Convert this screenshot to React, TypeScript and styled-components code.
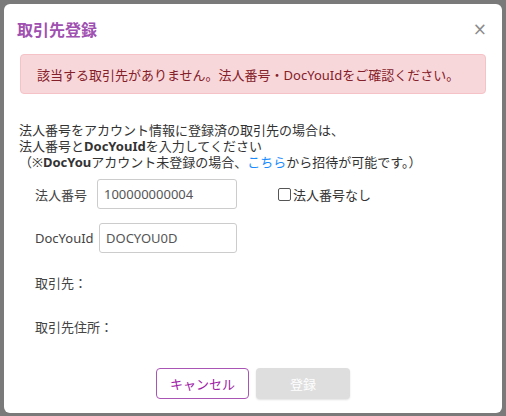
import React from "react";
import styled, { createGlobalStyle } from "styled-components";

const Global = createGlobalStyle`
  html, body { margin: 0; padding: 0; }
  body {
    background: #7a7a7a;
    font-family: "Noto Sans", "Noto Sans CJK JP", sans-serif;
    width: 506px;
    height: 416px;
    overflow: hidden;
  }
`;

const Overlay = styled.div`
  width: 506px;
  height: 416px;
  box-sizing: border-box;
  padding: 4px 4px 3px 4px;
  display: flex;
`;

const Modal = styled.div`
  flex: 1;
  background: #fff;
  border-radius: 6px;
  display: flex;
  flex-direction: column;
  box-sizing: border-box;
`;

const Header = styled.div`
  display: flex;
  align-items: center;
  justify-content: space-between;
  padding: 12px 15px 0 13px;
  height: 26px;
`;

const Title = styled.h2`
  margin: 0;
  font-size: 16px;
  font-weight: 700;
  color: #a050b0;
  font-family: "Noto Sans CJK JP", sans-serif;
`;

const Close = styled.button`
  border: none;
  background: none;
  padding: 0;
  color: #8c8c8c;
  font-size: 17px;
  line-height: 1;
  cursor: pointer;
  font-family: "DejaVu Sans", sans-serif;
`;

const Alert = styled.div`
  margin: 12px 16px 0 16px;
  height: 40px;
  box-sizing: border-box;
  background: #f8d7da;
  border: 1px solid #f5c2c7;
  border-radius: 4px;
  color: #842029;
  font-size: 13px;
  display: flex;
  align-items: center;
  padding-left: 16px;
`;

const Body = styled.div`
  padding: 28px 15px 0 15px;
  color: #333;
  font-size: 13px;
  line-height: 16px;
`;

const Desc = styled.p`
  margin: 0;
`;

const Link = styled.span`
  color: #1a8cff;
`;

const Form = styled.div`
  display: flex;
  flex-direction: column;
  padding: 0 0 0 31px;
  margin-top: 2px;
`;

const Row = styled.div`
  display: flex;
  align-items: center;
  height: 44px;
`;

const Label = styled.span<{ $w?: number }>`
  width: ${(p) => (p.$w ? `${p.$w}px` : "auto")};
  color: #444;
  font-size: 13px;
`;

const Input = styled.div<{ $w: number }>`
  width: ${(p) => p.$w}px;
  height: 30px;
  box-sizing: border-box;
  border: 1px solid #ccc;
  border-radius: 3px;
  color: #555;
  font-size: 13px;
  display: flex;
  align-items: center;
  padding-left: 6px;
`;

const Check = styled.label`
  display: flex;
  align-items: center;
  margin-left: 41px;
  color: #333;
  font-size: 13px;
  gap: 2px;
`;

const Box = styled.span`
  width: 11px;
  height: 11px;
  border: 1px solid #555;
  border-radius: 2px;
  display: inline-block;
`;

const Footer = styled.div`
  display: flex;
  justify-content: center;
  gap: 7px;
  margin-top: auto;
  padding-bottom: 14px;
`;

const Button = styled.button<{ $primary?: boolean }>`
  width: ${(p) => (p.$primary ? 94 : 93)}px;
  height: 31px;
  box-sizing: border-box;
  border-radius: 4px;
  font-size: 13px;
  font-family: "Noto Sans CJK JP", sans-serif;
  border: ${(p) => (p.$primary ? "none" : "1px solid #a855b5")};
  background: ${(p) => (p.$primary ? "#dedede" : "#fff")};
  color: ${(p) => (p.$primary ? "#fff" : "#a020a8")};
  box-shadow: ${(p) => (p.$primary ? "0 1px 2px rgba(0,0,0,0.12)" : "none")};
  padding: 0;
`;

export default function App() {
  return (
    <>
      <Global />
      <Overlay>
        <Modal>
          <Header>
            <Title>取引先登録</Title>
            <Close aria-label="close">×</Close>
          </Header>
          <Alert>該当する取引先がありません。法人番号・DocYouIdをご確認ください。</Alert>
          <Body>
            <Desc>
              法人番号をアカウント情報に登録済の取引先の場合は、
              <br />
              法人番号と<b>DocYouId</b>を入力してください
              <br />
              （※<b>DocYou</b>アカウント未登録の場合、<Link>こちら</Link>から招待が可能です。）
            </Desc>
          </Body>
          <Form>
            <Row>
              <Label $w={62}>法人番号</Label>
              <Input $w={140}>100000000004</Input>
              <Check>
                <Box />
                法人番号なし
              </Check>
            </Row>
            <Row>
              <Label $w={64}>DocYouId</Label>
              <Input $w={138}>DOCYOU0D</Input>
            </Row>
            <Row>
              <Label>取引先：</Label>
            </Row>
            <Row>
              <Label>取引先住所：</Label>
            </Row>
          </Form>
          <Footer>
            <Button>キャンセル</Button>
            <Button $primary>登録</Button>
          </Footer>
        </Modal>
      </Overlay>
    </>
  );
}
